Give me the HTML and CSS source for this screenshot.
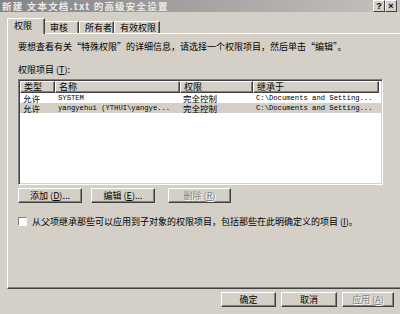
FILE: index.html
```html
<!DOCTYPE html>
<html lang="zh-CN">

<head>
    <meta charset="UTF-8">
    <title>新建 文本文档.txt 的高级安全设置</title>
    <link rel="stylesheet" href="styles.css">
</head>

<body>
    <div class="titlebar">
        <span class="title">新建 文本文档.txt 的高级安全设置</span>
        <div class="caption-btns">
            <span class="cap-btn">?</span>
            <span class="cap-btn">×</span>
        </div>
    </div>

    <div class="tabs">
        <div class="tab tab-active">权限</div>
        <div class="tab tab-audit">审核</div>
        <div class="tab tab-owner">所有者</div>
        <div class="tab tab-eff">有效权限</div>
    </div>

    <div class="panel">
        <p class="intro">要想查看有关“特殊权限”的详细信息，请选择一个权限项目，然后单击“编辑”。</p>
        <p class="label">权限项目 (<u>T</u>):</p>

        <div class="list">
            <div class="row head">
                <span class="c-type">类型</span>
                <span class="c-name">名称</span>
                <span class="c-perm">权限</span>
                <span class="c-from">继承于</span>
            </div>
            <div class="row">
                <span class="c-type">允许</span>
                <span class="c-name mono">SYSTEM</span>
                <span class="c-perm">完全控制</span>
                <span class="c-from mono">C:\Documents and Setting...</span>
            </div>
            <div class="row sel">
                <span class="c-type">允许</span>
                <span class="c-name mono">yangyehui (YTHUI\yangye...</span>
                <span class="c-perm">完全控制</span>
                <span class="c-from mono">C:\Documents and Setting...</span>
            </div>
        </div>

        <div class="btnrow">
            <span class="btn btn-add">添加 (<u>D</u>)...</span>
            <span class="btn btn-edit">编辑 (<u>E</u>)...</span>
            <span class="btn btn-del disabled">删除 (<u>R</u>)</span>
        </div>

        <div class="check">
            <span class="box"></span>
            <span>从父项继承那些可以应用到子对象的权限项目，包括那些在此明确定义的项目 (<u>I</u>)。</span>
        </div>
    </div>

    <div class="footer">
        <span class="btn btn-ok">确定</span>
        <span class="btn btn-cancel">取消</span>
        <span class="btn btn-apply disabled">应用 (<u>A</u>)</span>
    </div>
</body>

</html>
```

FILE: styles.css
```css
body {
    margin: 0;
    width: 400px;
    height: 314px;
    overflow: hidden;
    background-color: #d4d0c8;
    font-family: "Noto Sans CJK SC", "Liberation Sans", sans-serif;
    font-size: 9px;
    color: #000;
}

p {
    margin: 0;
}

u {
    text-decoration: underline;
}

.titlebar {
    height: 12px;
    background: linear-gradient(to right, #858585, #c4c2be);
    display: flex;
    justify-content: space-between;
    align-items: flex-start;
}

.title {
    color: #ececec;
    font-weight: bold;
    font-size: 9.5px;
    line-height: 12px;
    letter-spacing: 1.2px;
    padding-left: 2px;
    white-space: nowrap;
}

.caption-btns {
    display: flex;
    padding-right: 3px;
}

.cap-btn {
    width: 10px;
    height: 10px;
    line-height: 10px;
    text-align: center;
    font-family: "Liberation Sans", sans-serif;
    font-weight: bold;
    font-size: 9px;
    background-color: #d4d0c8;
    border-top: 1px solid #fff;
    border-left: 1px solid #fff;
    border-right: 1px solid #404040;
    border-bottom: 1px solid #404040;
}

.tabs {
    display: flex;
    align-items: flex-end;
    margin-top: 6px;
    margin-left: 7px;
    height: 15px;
    position: relative;
    z-index: 1;
}

.tab {
    height: 11px;
    line-height: 11px;
    padding-left: 5px;
    white-space: nowrap;
    border-top: 1px solid #fff;
    border-left: 1px solid #fff;
    border-right: 1px solid #404040;
    background-color: #d4d0c8;
    box-shadow: inset -1px 0 0 #808080;
}

.tab-active {
    width: 30px;
    height: 15px;
    line-height: 13px;
    padding-left: 6px;
    margin-bottom: -1px;
}

.tab-audit {
    width: 28px;
    border-left: none;
}

.tab-owner {
    width: 28px;
}

.tab-eff {
    width: 39px;
}

.panel {
    width: 385px;
    height: 254px;
    margin-left: 7px;
    border-top: 1px solid #fff;
    border-left: 1px solid #fff;
    border-right: 1px solid #404040;
    border-bottom: 1px solid #404040;
    box-shadow: inset -1px -1px 0 #808080;
    padding-left: 10px;
}

.intro {
    margin-top: 8px;
    line-height: 10px;
    height: 10px;
    white-space: nowrap;
}

.label {
    margin-top: 13px;
    line-height: 10px;
    height: 10px;
}

.list {
    margin-top: 4px;
    width: 361px;
    height: 102px;
    background-color: #fff;
    border-top: 1px solid #808080;
    border-left: 1px solid #808080;
    border-right: 1px solid #fff;
    border-bottom: 1px solid #fff;
    box-shadow: inset 1px 1px 0 #404040, inset -1px -1px 0 #d4d0c8;
    padding: 1px;
}

.row {
    display: flex;
    align-items: center;
    height: 10px;
    line-height: 10px;
    font-size: 8.5px;
    white-space: nowrap;
}

.row span {
    padding-left: 3px;
    box-sizing: border-box;
}

.row.head {
    height: 12px;
    font-size: 9px;
    align-items: stretch;
}

.row.head span {
    background-color: #d4d0c8;
    border-top: 1px solid #fff;
    border-left: 1px solid #fff;
    border-right: 1px solid #404040;
    border-bottom: 1px solid #404040;
    box-shadow: inset -1px -1px 0 #808080;
}

.row.sel {
    background-color: #d4d0c8;
}

.c-type {
    width: 35px;
}

.c-name {
    width: 125px;
}

.c-perm {
    width: 73px;
}

.c-from {
    width: 126px;
}

.mono {
    font-family: "Liberation Mono", monospace;
    font-size: 7.2px;
    padding-left: 5px;
}

.btnrow {
    display: flex;
    margin-top: 3px;
    height: 15px;
}

.btn {
    display: flex;
    align-items: center;
    justify-content: center;
    height: 15px;
    box-sizing: border-box;
    background-color: #d4d0c8;
    border-top: 1px solid #fff;
    border-left: 1px solid #fff;
    border-right: 1px solid #404040;
    border-bottom: 1px solid #404040;
    box-shadow: inset -1px -1px 0 #808080;
    white-space: nowrap;
}

.btn.disabled {
    color: #808080;
    text-shadow: 1px 1px 0 #fff;
}

.btn-add {
    width: 64px;
}

.btn-edit {
    width: 64px;
    margin-left: 9px;
}

.btn-del {
    width: 63px;
    margin-left: 13px;
}

.check {
    display: flex;
    align-items: center;
    margin-top: 13px;
    height: 10px;
    white-space: nowrap;
}

.box {
    width: 9px;
    height: 9px;
    box-sizing: border-box;
    background-color: #fff;
    border-top: 1px solid #808080;
    border-left: 1px solid #808080;
    border-right: 1px solid #fff;
    border-bottom: 1px solid #fff;
    margin-right: 5px;
}

.footer {
    display: flex;
    justify-content: flex-end;
    gap: 5px;
    margin-top: 3px;
    padding-right: 6px;
}

.btn-ok {
    width: 55px;
}

.btn-cancel {
    width: 56px;
}

.btn-apply {
    width: 52px;
}
```
